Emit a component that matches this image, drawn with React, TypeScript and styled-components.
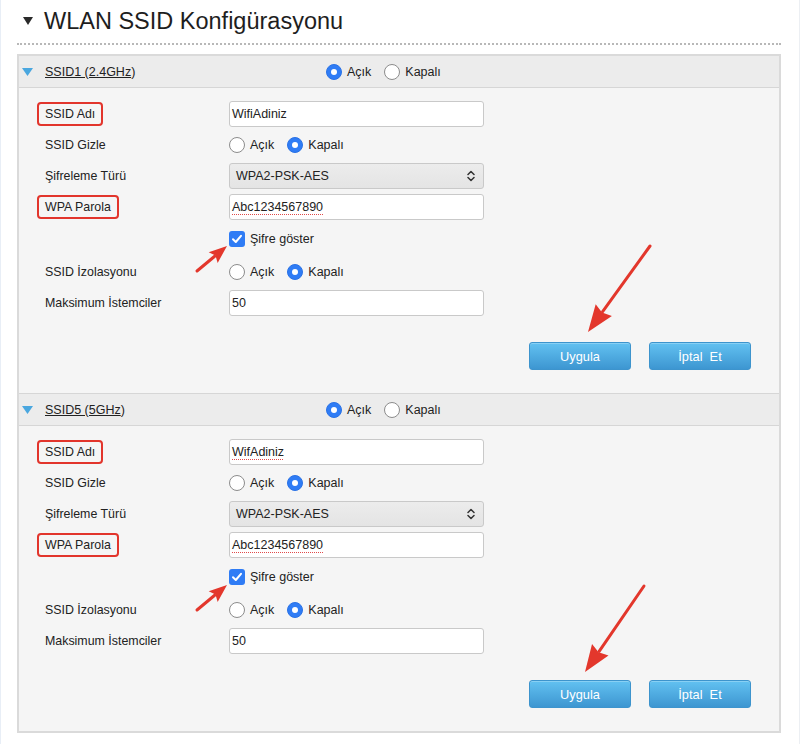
import React from "react";
import styled, { createGlobalStyle } from "styled-components";

const Global = createGlobalStyle`
  html, body { margin: 0; padding: 0; background: #fff; }
  body { font-family: "Liberation Sans", Arial, Helvetica, sans-serif; color: #222; }
  * { box-sizing: border-box; }
`;

const Page = styled.div`
  position: relative;
  width: 800px;
  height: 744px;
  overflow: hidden;
  background: #fff;
  border-left: 1px solid #e8eef6;
  border-right: 1px solid #eceff3;
  padding: 6px 18px 0 16px;
`;

const Title = styled.h1`
  margin: 0;
  display: flex;
  align-items: center;
  gap: 11px;
  padding: 0 0 7px 6px;
  font-size: 23.5px;
  font-weight: normal;
  line-height: 30px;
  color: #1e1e1e;
  border-bottom: 2px dotted #b8b8b8;
`;

const Panel = styled.section`
  margin-top: 9px;
  border: 2px solid #dadada;
  background: #f5f5f5;
`;

const SectionHeader = styled.div<{ $first?: boolean }>`
  display: flex;
  align-items: center;
  height: ${(p) => (p.$first ? "32px" : "33px")};
  background: #ececec;
  border-top: ${(p) => (p.$first ? "none" : "1px solid #d6d6d6")};
  border-bottom: 1px solid #d6d6d6;
  padding-left: 3px;
  font-size: 12.5px;
`;

const HeaderTitle = styled.div`
  width: 304px;
  display: flex;
  align-items: center;
  gap: 12px;
`;

const SsidLink = styled.span`
  color: #222;
  u {
    text-decoration: underline;
    text-underline-offset: 1px;
  }
`;

const SectionBody = styled.div`
  padding: 10px 28px 23px 26px;
`;

const FormRow = styled.div<{ $tall?: boolean }>`
  display: grid;
  grid-template-columns: 184px 255px;
  align-items: center;
  height: ${(p) => (p.$tall ? "34px" : "31px")};
  font-size: 12.4px;
`;

const FieldLabel = styled.span<{ $boxed?: boolean }>`
  justify-self: start;
  line-height: 16px;
  ${(p) =>
    p.$boxed
      ? `
    margin-left: -8px;
    padding: 2px 6px 2px 6px;
    border: 2px solid #e2352c;
    border-radius: 4px;
  `
      : ""}
`;

const TextField = styled.div`
  width: 255px;
  height: 26px;
  border: 1px solid #c9c9c9;
  border-radius: 3px;
  background: #fff;
  padding: 0 2px;
  display: flex;
  align-items: center;
  font-size: 12.5px;
  color: #222;
`;

const FieldValue = styled.span<{ $spell?: boolean }>`
  text-decoration: ${(p) => (p.$spell ? "underline dotted #e04a4a" : "none")};
  text-decoration-thickness: 1px;
  text-underline-offset: 3px;
`;

const SelectBox = styled.div`
  width: 255px;
  height: 26px;
  border: 1px solid #c9c9c9;
  border-radius: 3px;
  background: linear-gradient(#ececec, #e4e4e4);
  display: flex;
  align-items: center;
  justify-content: space-between;
  padding: 0 8px 0 6px;
  font-size: 12.5px;
  color: #222;
`;

const OptionGroup = styled.div`
  display: flex;
  align-items: center;
  gap: 13px;
`;

const Option = styled.label`
  display: flex;
  align-items: center;
  gap: 5px;
  font-size: 12.5px;
  color: #222;
`;

const RadioDot = styled.span<{ $checked?: boolean }>`
  position: relative;
  width: 16px;
  height: 16px;
  border-radius: 50%;
  background: ${(p) => (p.$checked ? "#2f7cf5" : "#fff")};
  border: 1px solid ${(p) => (p.$checked ? "#2a72e6" : "#8c8c8c")};
  &::after {
    content: "";
    display: ${(p) => (p.$checked ? "block" : "none")};
    position: absolute;
    left: 4px;
    top: 4px;
    width: 6px;
    height: 6px;
    border-radius: 50%;
    background: #fff;
  }
`;

const CheckBox = styled.span`
  width: 16px;
  height: 16px;
  border-radius: 3px;
  background: #2f7cf5;
  display: flex;
  align-items: center;
  justify-content: center;
`;

const Actions = styled.div`
  display: flex;
  justify-content: flex-end;
  gap: 18px;
  margin-top: 24px;
`;

const ActionButton = styled.button`
  width: 102px;
  height: 28px;
  border: 1px solid #3d94cd;
  border-radius: 3px;
  background: linear-gradient(#62c1f1, #3d96d1);
  box-shadow: inset 0 1px 0 rgba(255, 255, 255, 0.25);
  color: #fff;
  font-family: inherit;
  font-size: 12.8px;
  padding: 0;
  white-space: pre;
`;

const Overlay = styled.svg`
  position: absolute;
  top: 0;
  left: -1px;
  width: 800px;
  height: 744px;
  pointer-events: none;
`;

function Radio({ checked, label }: { checked?: boolean; label: string }) {
  return (
    <Option>
      <RadioDot $checked={checked} />
      {label}
    </Option>
  );
}

function OnOff({ on }: { on: boolean }) {
  return (
    <OptionGroup>
      <Radio checked={on} label="Açık" />
      <Radio checked={!on} label="Kapalı" />
    </OptionGroup>
  );
}

function Chevrons() {
  return (
    <svg width="8" height="12" viewBox="0 0 8 12">
      <path d="M1 4.5 L4 1.5 L7 4.5 M1 7.5 L4 10.5 L7 7.5" fill="none" stroke="#333" strokeWidth="1.5" strokeLinecap="round" strokeLinejoin="round" />
    </svg>
  );
}

function Field({ value, spell }: { value: string; spell?: boolean }) {
  return (
    <TextField>
      <FieldValue $spell={spell}>{value}</FieldValue>
    </TextField>
  );
}

function Section({ first, name, ssid, ssidSpell }: { first?: boolean; name: string; ssid: string; ssidSpell?: boolean }) {
  return (
    <>
      <SectionHeader $first={first}>
        <HeaderTitle>
          <svg width="11" height="8" viewBox="0 0 11 8">
            <path d="M0 0 H11 L5.5 8 Z" fill="#4aa7df" />
          </svg>
          <SsidLink>
            <u>{name}</u>)
          </SsidLink>
        </HeaderTitle>
        <OnOff on={true} />
      </SectionHeader>
      <SectionBody>
        <FormRow>
          <FieldLabel $boxed>SSID Adı</FieldLabel>
          <Field value={ssid} spell={ssidSpell} />
        </FormRow>
        <FormRow>
          <FieldLabel>SSID Gizle</FieldLabel>
          <OnOff on={false} />
        </FormRow>
        <FormRow>
          <FieldLabel>Şifreleme Türü</FieldLabel>
          <SelectBox>
            <span>WPA2-PSK-AES</span>
            <Chevrons />
          </SelectBox>
        </FormRow>
        <FormRow>
          <FieldLabel $boxed>WPA Parola</FieldLabel>
          <Field value="Abc1234567890" spell />
        </FormRow>
        <FormRow $tall>
          <span />
          <Option>
            <CheckBox>
              <svg width="12" height="12" viewBox="0 0 12 12">
                <path d="M2 6.3 L4.8 9 L10 2.8" fill="none" stroke="#fff" strokeWidth="2" strokeLinecap="round" strokeLinejoin="round" />
              </svg>
            </CheckBox>
            Şifre göster
          </Option>
        </FormRow>
        <FormRow>
          <FieldLabel>SSID İzolasyonu</FieldLabel>
          <OnOff on={false} />
        </FormRow>
        <FormRow>
          <FieldLabel>Maksimum İstemciler</FieldLabel>
          <Field value="50" />
        </FormRow>
        <Actions>
          <ActionButton>Uygula</ActionButton>
          <ActionButton>{"İptal  Et"}</ActionButton>
        </Actions>
      </SectionBody>
    </>
  );
}

function Arrow({ x1, y1, x2, y2, head, half, width }: { x1: number; y1: number; x2: number; y2: number; head: number; half: number; width: number }) {
  const dx = x2 - x1;
  const dy = y2 - y1;
  const len = Math.hypot(dx, dy);
  const ux = dx / len;
  const uy = dy / len;
  const bx = x2 - ux * head;
  const by = y2 - uy * head;
  const px = -uy;
  const py = ux;
  const pts = `${x2},${y2} ${bx + px * half},${by + py * half} ${bx + ux * 3},${by + uy * 3} ${bx - px * half},${by - py * half}`;
  return (
    <g>
      <line x1={x1} y1={y1} x2={bx + ux * 2} y2={by + uy * 2} stroke="#e3372c" strokeWidth={width} strokeLinecap="round" />
      <polygon points={pts} fill="#e3372c" />
    </g>
  );
}

export default function App() {
  return (
    <Page>
      <Global />
      <Title>
        <svg width="10" height="8" viewBox="0 0 10 8">
          <path d="M0 0 H10 L5 8 Z" fill="#2a2a2a" />
        </svg>
        WLAN SSID Konfigürasyonu
      </Title>
      <Panel>
        <Section first name="SSID1 (2.4GHz" ssid="WifiAdiniz" />
        <Section name="SSID5 (5GHz" ssid="WifAdiniz" ssidSpell />
      </Panel>
      <Overlay viewBox="0 0 800 744">
        <Arrow x1={650} y1={246} x2={588} y2={332} head={27} half={10} width={3} />
        <Arrow x1={197} y1={271} x2={227} y2={246} head={18} half={7} width={3} />
        <Arrow x1={644} y1={586} x2={585} y2={672} head={27} half={10} width={3} />
        <Arrow x1={197} y1={610} x2={227} y2={585} head={18} half={7} width={3} />
      </Overlay>
    </Page>
  );
}
